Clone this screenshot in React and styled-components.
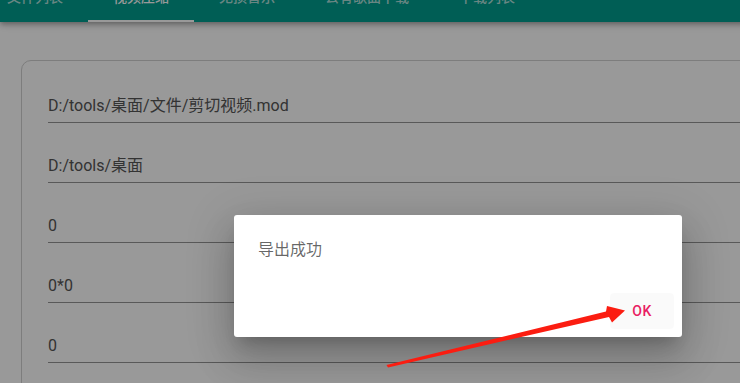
import React from 'react'
import styled, { createGlobalStyle } from 'styled-components'

const GlobalStyle = createGlobalStyle`
  html, body {
    margin: 0;
    padding: 0;
    overflow: hidden;
    background: #fff;
  }
  body {
    font-family: Roboto, "Noto Sans CJK SC", sans-serif;
  }
`

const Page = styled.div`
  position: relative;
  display: flow-root;
  width: 916px;
  height: 552px;
  background: #fff;
`

const AppBar = styled.div`
  height: 50px;
  margin-top: -28px;
  background: #009d8e;
  display: flex;
  box-shadow: 0 2px 4px -1px rgba(0, 0, 0, 0.2), 0 4px 5px 0 rgba(0, 0, 0, 0.14),
    0 1px 10px 0 rgba(0, 0, 0, 0.12);
`

const TabList = styled.div`
  display: flex;
  margin-left: -18px;
  height: 100%;
`

const Tab = styled.div`
  position: relative;
  display: flex;
  align-items: center;
  padding: 0 25px;
  font-size: 14px;
  line-height: 20px;
  font-weight: 500;
  color: ${(p) => (p.$active ? '#fff' : 'rgba(255, 255, 255, 0.7)')};
  white-space: nowrap;

  &::after {
    content: '';
    display: ${(p) => (p.$active ? 'block' : 'none')};
    position: absolute;
    left: 0;
    right: 0;
    bottom: 0;
    height: 2px;
    background: #fff;
  }
`

const Card = styled.div`
  margin: 38px 21px 0;
  padding: 2px 26px 0;
  border: 1px solid #d0d0d0;
  border-radius: 10px;
  height: 520px;
  box-sizing: border-box;
`

const Field = styled.div`
  height: 60px;
  box-sizing: border-box;
  padding: 33px 0 6px;
  border-bottom: 1px solid rgba(0, 0, 0, 0.42);
  font-size: 16px;
  line-height: 20px;
  color: #555;
`

const Backdrop = styled.div`
  position: absolute;
  inset: 0;
  background: rgba(0, 0, 0, 0.4);
  display: flex;
  align-items: center;
  justify-content: center;
`

const Dialog = styled.div`
  width: 448px;
  height: 122px;
  background: #fff;
  border-radius: 3px;
  box-shadow: 0 11px 15px -7px rgba(0, 0, 0, 0.2), 0 24px 38px 3px rgba(0, 0, 0, 0.14),
    0 9px 46px 8px rgba(0, 0, 0, 0.12);
  display: flex;
  flex-direction: column;
`

const DialogText = styled.div`
  padding: 23px 24px 23px;
  font-size: 16px;
  line-height: 24px;
  color: rgba(0, 0, 0, 0.6);
`

const Actions = styled.div`
  display: flex;
  justify-content: flex-end;
  padding: 8px;
`

const TextButton = styled.button`
  min-width: 64px;
  height: 36px;
  padding: 6px 8px;
  border: none;
  border-radius: 4px;
  background: rgba(0, 0, 0, 0.02);
  color: #e91e63;
  font-family: Roboto, sans-serif;
  font-size: 14px;
  font-weight: 500;
  letter-spacing: 0.4px;
  text-transform: uppercase;
`

const Annotation = styled.svg`
  position: absolute;
  left: 0;
  top: 0;
  pointer-events: none;
`

const tabs = ['文件列表', '视频压缩', '无损音乐', '公有歌曲下载', '下载列表']
const fields = ['D:/tools/桌面/文件/剪切视频.mod', 'D:/tools/桌面', '0', '0*0', '0', '']

export default function App() {
  return (
    <>
      <GlobalStyle />
      <Page>
        <AppBar>
          <TabList>
            {tabs.map((t, i) => (
              <Tab key={t} $active={i === 1}>{t}</Tab>
            ))}
          </TabList>
        </AppBar>
        <Card>
          {fields.map((f, i) => (
            <Field key={i}>{f}</Field>
          ))}
        </Card>
        <Backdrop>
          <Dialog>
            <DialogText>导出成功</DialogText>
            <Actions>
              <TextButton>OK</TextButton>
            </Actions>
          </Dialog>
        </Backdrop>
        <Annotation width="740" height="383" viewBox="0 0 740 383">
          <polygon
            points="386.5,365 606,311.5 607,306 625,310.5 612,322.5 609,317 388,367.5"
            fill="#fb1d11"
          />
        </Annotation>
      </Page>
    </>
  )
}
